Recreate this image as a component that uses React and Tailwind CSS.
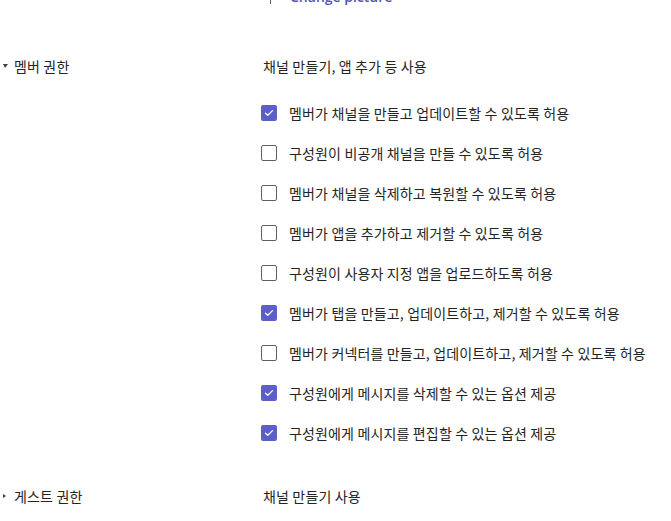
import { useState } from "react";

const items = [
  { label: "멤버가 채널을 만들고 업데이트할 수 있도록 허용", on: true },
  { label: "구성원이 비공개 채널을 만들 수 있도록 허용", on: false },
  { label: "멤버가 채널을 삭제하고 복원할 수 있도록 허용", on: false },
  { label: "멤버가 앱을 추가하고 제거할 수 있도록 허용", on: false },
  { label: "구성원이 사용자 지정 앱을 업로드하도록 허용", on: false },
  { label: "멤버가 탭을 만들고, 업데이트하고, 제거할 수 있도록 허용", on: true },
  { label: "멤버가 커넥터를 만들고, 업데이트하고, 제거할 수 있도록 허용", on: false },
  { label: "구성원에게 메시지를 삭제할 수 있는 옵션 제공", on: true },
  { label: "구성원에게 메시지를 편집할 수 있는 옵션 제공", on: true },
];

function Check({ on, onClick }) {
  return (
    <button
      onClick={onClick}
      className={
        "w-4 h-4 rounded-[2px] flex items-center justify-center shrink-0 " +
        (on ? "bg-[#5b5fc7]" : "border border-[#616161] bg-white")
      }
    >
      {on && (
        <svg width="10" height="8" viewBox="0 0 10 8" fill="none">
          <path d="M1.5 4.2 L3.8 6.3 L8.5 1.6" stroke="white" strokeWidth="1.3" strokeLinecap="round" strokeLinejoin="round" />
        </svg>
      )}
    </button>
  );
}

export default function App() {
  const [checks, setChecks] = useState(items.map((i) => i.on));

  const toggle = (idx) =>
    setChecks((s) => s.map((v, i) => (i === idx ? !v : v)));

  return (
    <div className="w-[671px] h-[521px] overflow-hidden bg-white text-[#242424] text-[14px] tracking-[0.15px] font-['Noto_Sans_CJK_KR','Noto_Sans',sans-serif]">
      {/* cut off picture control */}
      <div className="h-[5px] overflow-hidden">
        <div className="flex items-center h-5 -mt-[14px] pl-[270px] gap-[19px]">
          <div className="w-px h-4 bg-[#616161]" />
          <span className="text-[14px] font-semibold tracking-normal text-[#4f52b2] font-['Open_Sans',sans-serif]">
            Change picture
          </span>
        </div>
      </div>

      {/* member permissions */}
      <div className="flex items-center h-5 mt-[51px]">
        <div className="w-[263px] flex items-center">
          <svg width="14" height="8" viewBox="0 0 14 8" className="shrink-0">
            <polygon points="3,2 8,2 5,6" fill="#424242" />
          </svg>
          <span>멤버 권한</span>
        </div>
        <span>채널 만들기, 앱 추가 등 사용</span>
      </div>

      <div className="flex flex-col mt-[17px] pl-[261px]">
        {items.map((item, idx) => (
          <label key={idx} className="flex items-center h-10 gap-3 whitespace-nowrap">
            <Check on={checks[idx]} onClick={() => toggle(idx)} />
            <span>{item.label}</span>
          </label>
        ))}
      </div>

      {/* guest permissions */}
      <div className="flex items-center h-5 mt-[33px]">
        <div className="w-[263px] flex items-center">
          <svg width="14" height="8" viewBox="0 0 14 8" className="shrink-0">
            <polygon points="3,2 6,4 3,6" fill="#424242" />
          </svg>
          <span>게스트 권한</span>
        </div>
        <span>채널 만들기 사용</span>
      </div>
    </div>
  );
}
